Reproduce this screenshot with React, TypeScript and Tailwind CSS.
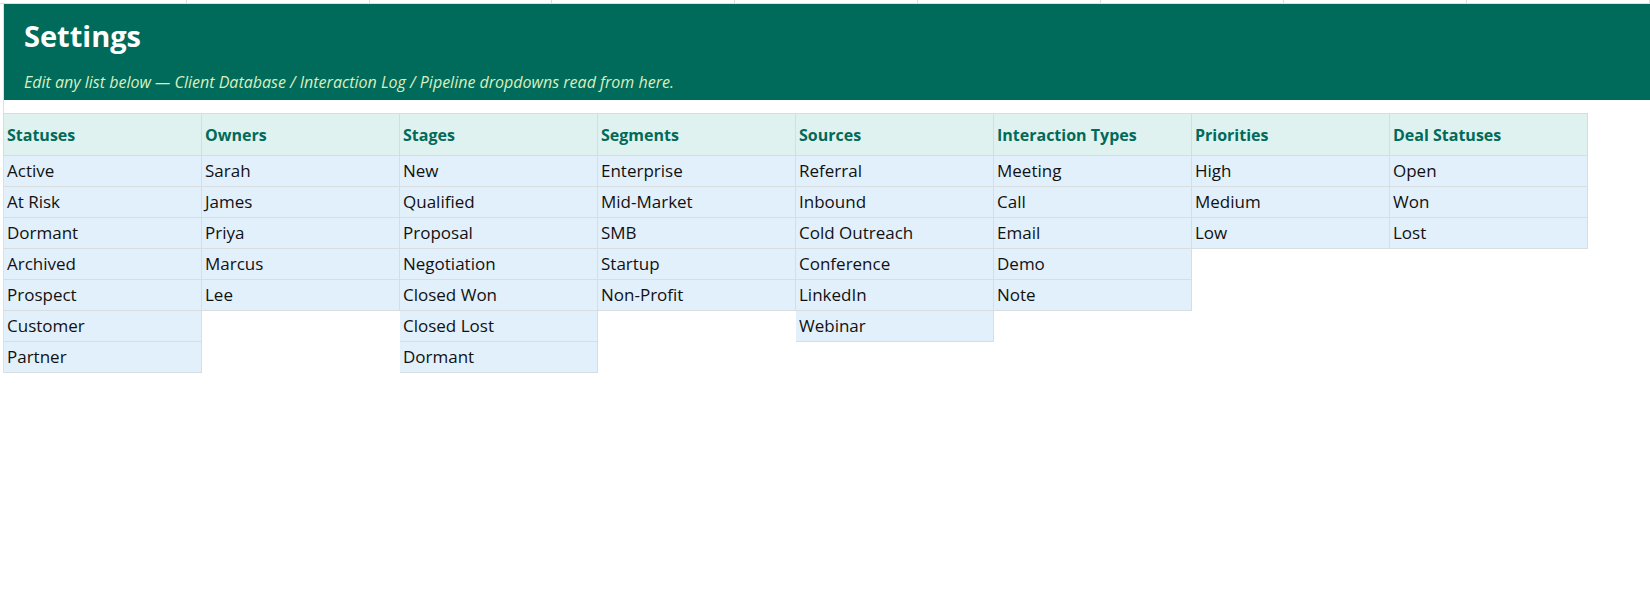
const cols: [string, string[]][] = [
  ["Statuses", ["Active", "At Risk", "Dormant", "Archived", "Prospect", "Customer", "Partner"]],
  ["Owners", ["Sarah", "James", "Priya", "Marcus", "Lee"]],
  ["Stages", ["New", "Qualified", "Proposal", "Negotiation", "Closed Won", "Closed Lost", "Dormant"]],
  ["Segments", ["Enterprise", "Mid-Market", "SMB", "Startup", "Non-Profit"]],
  ["Sources", ["Referral", "Inbound", "Cold Outreach", "Conference", "LinkedIn", "Webinar"]],
  ["Interaction Types", ["Meeting", "Call", "Email", "Demo", "Note"]],
  ["Priorities", ["High", "Medium", "Low"]],
  ["Deal Statuses", ["Open", "Won", "Lost"]],
];

export default function App() {
  return (
    <div className="w-[1650px] h-[598px] bg-white overflow-hidden relative" style={{ fontFamily: '"Open Sans", "Liberation Sans", sans-serif' }}>
      <div className="h-[4px] flex border-b border-[#e0e0e0]">
        <div className="w-[4px]" />
        {Array.from({ length: 9 }).map((_, i) => (
          <div key={i} className="w-[198px] border-r border-[#dcdcdc]" />
        ))}
      </div>
      <div className="flex">
        <div className="w-[4px] border-r border-[#e0e0e0]" />
        <div className="flex-1">
          <div className="h-[96px] bg-[#006a5b] pl-[20px] pt-[14px]">
            <div className="text-white text-[29px] font-bold leading-[36px]">Settings</div>
            <div className="text-[#d8efbf] italic text-[16px] mt-[16px]">Edit any list below — Client Database / Interaction Log / Pipeline dropdowns read from here.</div>
          </div>
          <div className="flex mt-[14px]">
            {cols.map(([h, items]) => (
              <div key={h} className="w-[198px]">
                <div className="h-[43px] bg-[#e0f2ef] border border-[#d6dedd] -ml-px -mt-px px-[3px] flex items-center text-[#006a5b] font-bold text-[16px]">{h}</div>
                {items.map((it) => (
                  <div key={it} className="h-[31px] bg-[#e2f0fb] border-b border-r border-[#d8dde0] px-[3px] flex items-center text-[#111] text-[17px]">{it}</div>
                ))}
              </div>
            ))}
          </div>
        </div>
      </div>
    </div>
  );
}
